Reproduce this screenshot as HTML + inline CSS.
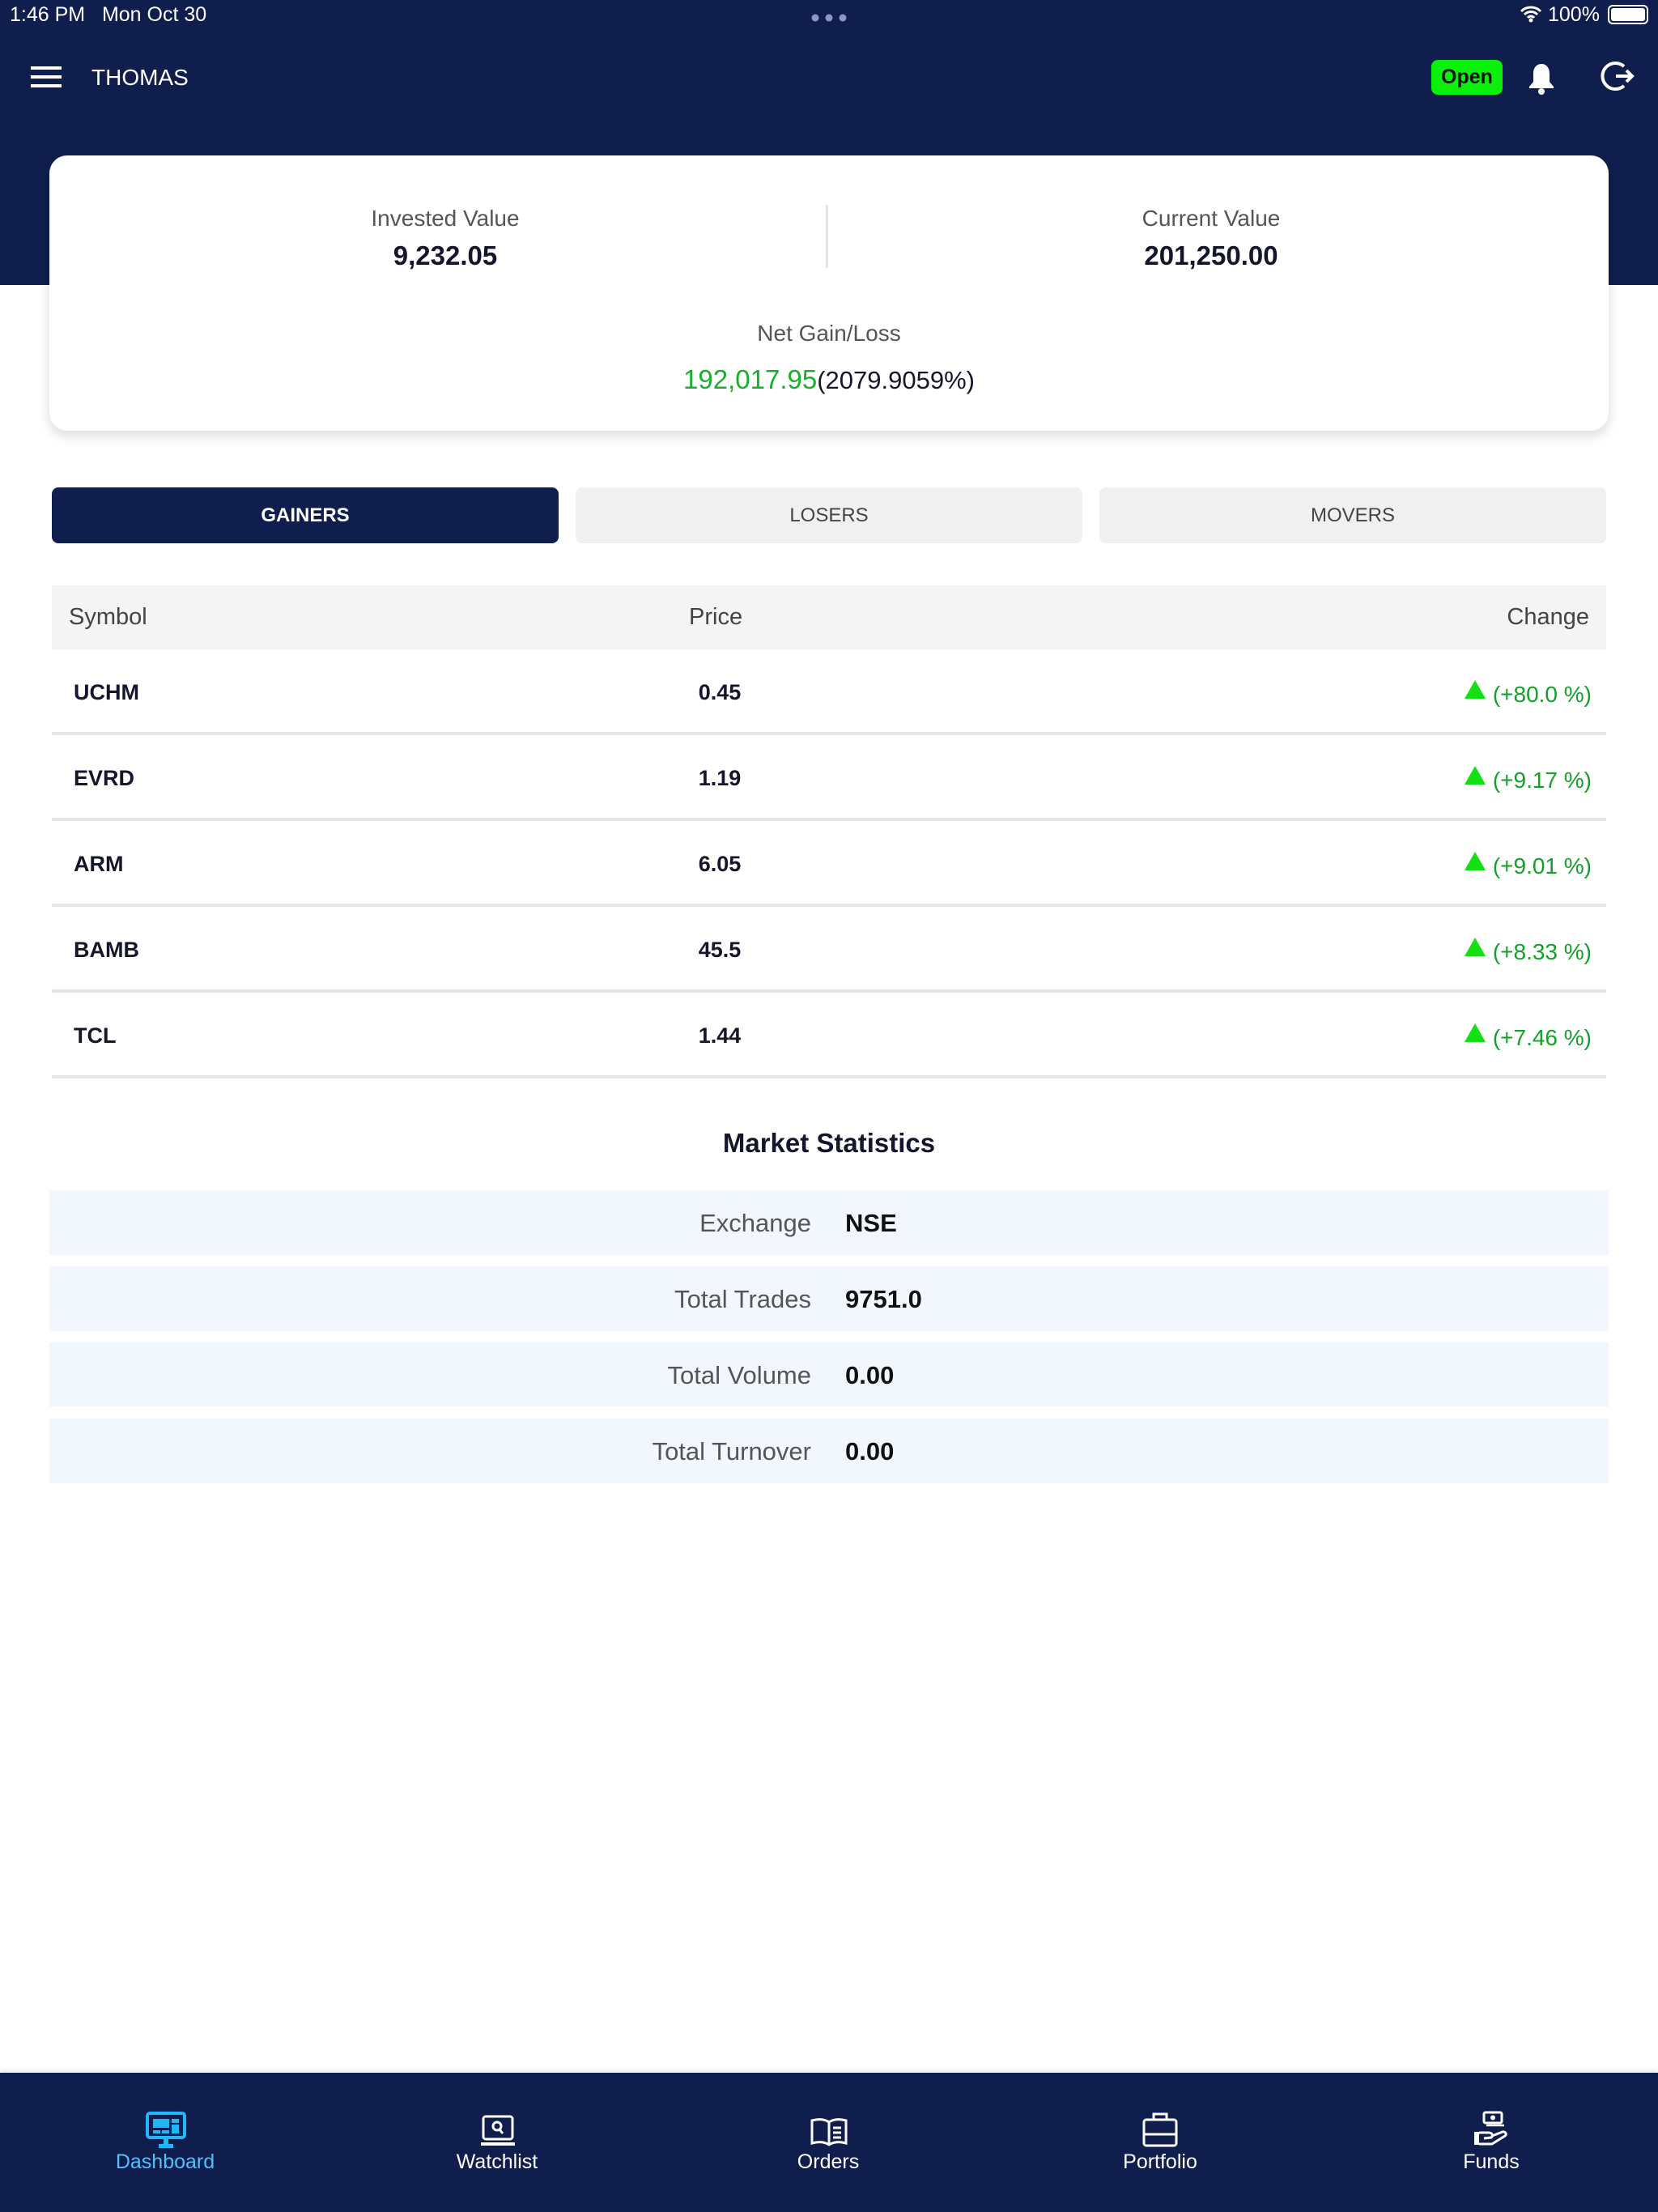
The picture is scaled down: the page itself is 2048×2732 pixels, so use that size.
<!DOCTYPE html>
<html><head><meta charset="utf-8"><style>
*{margin:0;padding:0;box-sizing:border-box}
body{width:2048px;height:2732px;position:relative;background:#fff;font-family:"Liberation Sans",sans-serif;overflow:hidden}
.a{position:absolute}
.navy{background:#101e4e}
.c{text-align:center}
.row{position:absolute;left:64px;width:1920px;height:106px;border-bottom:4px solid #e6e6e6}
.row>span{position:absolute;top:38px;font-size:27px;font-weight:bold;color:#15162b}
.sym{left:27px}.pr{left:770px;width:110px;text-align:center}
.ch{right:18px;color:#14a02a!important;font-weight:normal!important;font-size:28px!important;top:40px!important}
.tri{display:inline-block;vertical-align:top;margin-top:-2px;margin-right:9px;width:0;height:0;border-left:13px solid transparent;border-right:13px solid transparent;border-bottom:23px solid #12e012}
.st{position:absolute;left:61px;width:1926px;height:80px;background:#f2f6fd}
.st .l{position:absolute;right:985px;top:23px;font-size:31px;color:#555}
.st .v{position:absolute;left:983px;top:23px;font-size:31px;font-weight:bold;color:#111}
.nav{position:absolute;top:2656px;width:300px;text-align:center;font-size:25px;color:#fff}
</style></head><body>
<div class="a navy" style="left:0;top:0;width:2048px;height:352px"></div>
<div class="a" style="left:12px;top:4px;font-size:25px;color:#fff">1:46 PM&nbsp;&nbsp;&nbsp;Mon Oct 30</div>
<div class="a" style="left:1002px;top:14px;width:44px;height:10px">
<svg width="44" height="10"><circle cx="5" cy="5" r="4.5" fill="#8e97c0"/><circle cx="22" cy="5" r="4.5" fill="#8e97c0"/><circle cx="39" cy="5" r="4.5" fill="#8e97c0"/></svg></div>
<svg class="a" style="left:1876px;top:6px" width="30" height="22" viewBox="0 0 30 22"><path d="M3 8a17 17 0 0 1 24 0M7 12a11 11 0 0 1 16 0M11 16a5 5 0 0 1 8 0" stroke="#fff" stroke-width="3" fill="none"/><circle cx="15" cy="19" r="2.5" fill="#fff"/></svg>
<div class="a" style="left:1912px;top:4px;font-size:25px;color:#fff">100%</div>
<div class="a" style="left:1986px;top:6px;width:50px;height:24px;border:2px solid #fff;border-radius:6px;padding:2px"><div style="width:100%;height:100%;background:#fff;border-radius:3px"></div></div>
<svg class="a" style="left:38px;top:82px" width="38" height="26"><rect y="0" width="38" height="4" fill="#fff"/><rect y="11" width="38" height="4" fill="#fff"/><rect y="22" width="38" height="4" fill="#fff"/></svg>
<div class="a" style="left:113px;top:80px;font-size:28px;color:#fff">THOMAS</div>
<div class="a" style="left:1768px;top:74px;width:88px;height:43px;background:#0af00a;border-radius:8px;font-size:25px;font-weight:bold;color:#111;text-align:center;line-height:43px">Open</div>
<svg class="a" style="left:1886px;top:76px" width="36" height="42" viewBox="0 0 36 42"><path d="M18 3c-7 0-10 6-10 12v10l-5 6v2h30v-2l-5-6V15c0-6-3-12-10-12z" fill="#fff"/><circle cx="18" cy="37" r="4" fill="#fff"/></svg>
<svg class="a" style="left:1976px;top:72px" width="48" height="44" viewBox="0 0 48 44"><path d="M30 10A16 16 0 1 0 30 34" stroke="#fff" stroke-width="4" fill="none"/><path d="M20 22h20M33 15l7 7-7 7" stroke="#fff" stroke-width="4" fill="none"/></svg>

<div class="a" style="left:61px;top:192px;width:1926px;height:340px;background:#fff;border-radius:22px;box-shadow:0 6px 14px rgba(0,0,0,0.15)"></div>
<div class="a c" style="left:350px;top:254px;width:400px;font-size:28px;color:#555">Invested Value</div>
<div class="a c" style="left:350px;top:297px;width:400px;font-size:33px;font-weight:bold;color:#15162b">9,232.05</div>
<div class="a" style="left:1020px;top:253px;width:3px;height:78px;background:#e3e3e3"></div>
<div class="a c" style="left:1296px;top:254px;width:400px;font-size:28px;color:#555">Current Value</div>
<div class="a c" style="left:1296px;top:297px;width:400px;font-size:33px;font-weight:bold;color:#15162b">201,250.00</div>
<div class="a c" style="left:824px;top:396px;width:400px;font-size:28px;color:#555">Net Gain/Loss</div>
<div class="a c" style="left:724px;top:450px;width:600px;font-size:31px;color:#15162b"><span style="color:#18b02a;font-size:33px">192,017.95</span>(2079.9059%)</div>

<div class="a c" style="left:64px;top:602px;width:626px;height:69px;background:#101e4e;border-radius:8px;color:#fff;font-size:24px;font-weight:bold;line-height:69px">GAINERS</div>
<div class="a c" style="left:711px;top:602px;width:626px;height:69px;background:#f0f0f0;border-radius:8px;color:#444;font-size:24px;line-height:69px">LOSERS</div>
<div class="a c" style="left:1358px;top:602px;width:626px;height:69px;background:#f0f0f0;border-radius:8px;color:#444;font-size:24px;line-height:69px">MOVERS</div>

<div class="a" style="left:64px;top:723px;width:1920px;height:79px;background:#f4f4f4"></div>
<div class="a" style="left:85px;top:746px;font-size:29px;color:#444">Symbol</div>
<div class="a" style="left:851px;top:746px;font-size:29px;color:#444">Price</div>
<div class="a" style="right:64px;top:746px;font-size:29px;color:#444;padding-right:21px">Change</div>

<div class="row" style="top:802px"><span class="sym">UCHM</span><span class="pr">0.45</span><span class="ch"><i class="tri"></i>(+80.0 %)</span></div>
<div class="row" style="top:908px"><span class="sym">EVRD</span><span class="pr">1.19</span><span class="ch"><i class="tri"></i>(+9.17 %)</span></div>
<div class="row" style="top:1014px"><span class="sym">ARM</span><span class="pr">6.05</span><span class="ch"><i class="tri"></i>(+9.01 %)</span></div>
<div class="row" style="top:1120px"><span class="sym">BAMB</span><span class="pr">45.5</span><span class="ch"><i class="tri"></i>(+8.33 %)</span></div>
<div class="row" style="top:1226px"><span class="sym">TCL</span><span class="pr">1.44</span><span class="ch"><i class="tri"></i>(+7.46 %)</span></div>

<div class="a c" style="left:724px;top:1393px;width:600px;font-size:33px;font-weight:bold;color:#15162b">Market Statistics</div>
<div class="st" style="top:1470px"><span class="l">Exchange</span><span class="v">NSE</span></div>
<div class="st" style="top:1564px"><span class="l">Total Trades</span><span class="v">9751.0</span></div>
<div class="st" style="top:1658px"><span class="l">Total Volume</span><span class="v">0.00</span></div>
<div class="st" style="top:1752px"><span class="l">Total Turnover</span><span class="v">0.00</span></div>

<div class="a navy" style="left:0;top:2560px;width:2048px;height:172px;box-shadow:0 -3px 6px rgba(0,0,0,0.08)"></div>
<svg class="a" style="left:180px;top:2608px" width="50" height="46" viewBox="0 0 50 46"><rect x="2" y="2" width="46" height="30" rx="3" stroke="#22b5f8" stroke-width="4" fill="none"/><rect x="9" y="9" width="20" height="11" fill="#22b5f8"/><rect x="32" y="9" width="9" height="5" fill="#22b5f8"/><rect x="32" y="16" width="9" height="11" fill="#22b5f8"/><rect x="9" y="23" width="9" height="4" fill="#22b5f8"/><rect x="20" y="23" width="9" height="4" fill="#22b5f8"/><rect x="22" y="32" width="6" height="8" fill="#22b5f8"/><rect x="16" y="40" width="18" height="5" fill="#22b5f8"/></svg>
<div class="nav" style="left:54px;color:#4fc3f7">Dashboard</div>
<svg class="a" style="left:592px;top:2612px" width="46" height="40" viewBox="0 0 46 40"><rect x="5" y="2" width="36" height="28" rx="3" stroke="#fff" stroke-width="3" fill="none"/><circle cx="22" cy="14" r="5" stroke="#fff" stroke-width="3" fill="none"/><path d="M25 18l4 5" stroke="#fff" stroke-width="3"/><rect x="2" y="34" width="42" height="4" fill="#fff"/></svg>
<div class="nav" style="left:464px">Watchlist</div>
<svg class="a" style="left:1000px;top:2614px" width="48" height="38" viewBox="0 0 48 38"><path d="M24 7C18 3 10 3 3 5v28c7-2 15-2 21 2 6-4 14-4 21-2V5c-7-2-15-2-21 2zM24 7v28" stroke="#fff" stroke-width="3" fill="none"/><path d="M29 14h10M29 20h10M29 26h10" stroke="#fff" stroke-width="3"/></svg>
<div class="nav" style="left:873px">Orders</div>
<svg class="a" style="left:1410px;top:2608px" width="46" height="44" viewBox="0 0 46 44"><path d="M15 10V3h16v7" stroke="#fff" stroke-width="3" fill="none"/><rect x="3" y="10" width="40" height="32" rx="3" stroke="#fff" stroke-width="3" fill="none"/><path d="M3 28h40" stroke="#fff" stroke-width="3"/></svg>
<div class="nav" style="left:1283px">Portfolio</div>
<svg class="a" style="left:1818px;top:2606px" width="46" height="48" viewBox="0 0 46 48"><rect x="15" y="3" width="22" height="13" rx="2" stroke="#fff" stroke-width="3" fill="none"/><circle cx="26" cy="9.5" r="3" fill="#fff"/><path d="M18 19h22" stroke="#fff" stroke-width="2.5"/><rect x="3" y="27" width="6" height="16" fill="#fff"/><path d="M9 28h12c4 0 6 4 3 6l-9 1M9 42h16l16-10c3-2 0-6-3-5l-13 5" stroke="#fff" stroke-width="3" fill="none"/></svg>
<div class="nav" style="left:1692px">Funds</div>
</body></html>
